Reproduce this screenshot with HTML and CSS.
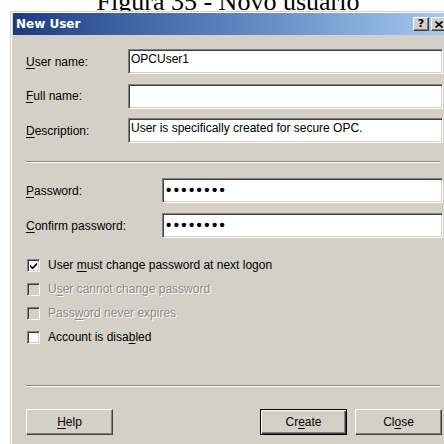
FILE: index.html
```html
<!DOCTYPE html>
<html lang="en">
<head>
<meta charset="utf-8">
<title>New User</title>
<link rel="stylesheet" href="styles.css">
</head>
<body>
<p class="figure-caption">Figura 35 - Novo usuário</p>
<div class="window">
  <div class="titlebar">
    <span class="title">New User</span>
    <div class="title-buttons">
      <span class="tbtn tbtn-help">?</span>
      <span class="tbtn"><svg width="8" height="7" viewBox="0 0 8 7"><path d="M0.5 0.5 L7.5 6.5 M7.5 0.5 L0.5 6.5" stroke="#000" stroke-width="1.6" fill="none"/></svg></span>
    </div>
  </div>
  <div class="client">
    <div class="fields fields-account">
      <span class="lbl"><u>U</u>ser name:</span>
      <div class="edit">OPCUser1</div>
      <span class="lbl"><u>F</u>ull name:</span>
      <div class="edit"></div>
      <span class="lbl"><u>D</u>escription:</span>
      <div class="edit">User is specifically created for secure OPC.</div>
    </div>

    <hr class="etched sep-top">

    <div class="fields fields-password">
      <span class="lbl"><u>P</u>assword:</span>
      <div class="edit edit-password">••••••••</div>
      <span class="lbl"><u>C</u>onfirm password:</span>
      <div class="edit edit-password">••••••••</div>
    </div>

    <ul class="checks">
      <li class="check">
        <span class="box"><svg width="7" height="7" viewBox="0 0 7 7"><path d="M0 2.5 L2.5 5 L7 0.5 L7 3 L2.5 7.5 L0 5 Z" fill="#000"/></svg></span>
        <span>User <u>m</u>ust change password at next logon</span>
      </li>
      <li class="check disabled">
        <span class="box"></span>
        <span>U<u>s</u>er cannot change password</span>
      </li>
      <li class="check disabled">
        <span class="box"></span>
        <span>Pass<u>w</u>ord never expires</span>
      </li>
      <li class="check">
        <span class="box"></span>
        <span>Account is disa<u>b</u>led</span>
      </li>
    </ul>

    <hr class="etched sep-bottom">

    <div class="buttons">
      <span class="btn btn-help"><span><u>H</u>elp</span></span>
      <span class="btn btn-default"><span>Cr<u>e</u>ate</span></span>
      <span class="btn"><span>Cl<u>o</u>se</span></span>
    </div>
  </div>
</div>
</body>
</html>
```

FILE: styles.css
```css
html, body {
  margin: 0;
  padding: 0;
  width: 444px;
  height: 444px;
  overflow: hidden;
  background: #fff;
}

/* document caption above the dialog, partly out of view */
.figure-caption {
  margin: 0;
  height: 11px;
  overflow: hidden;
  display: flex;
  align-items: flex-end;
  justify-content: center;
  padding-left: 12px;
  font: 26px/18px "Liberation Serif", serif;
  color: #000;
  white-space: nowrap;
}

/* classic dialog frame */
.window {
  margin-left: 10px;
  width: 442px;
  border-top: 1px solid #d4d0c8;
  border-left: 1px solid #d4d0c8;
  box-shadow: inset 1px 1px #fff;
  padding: 1px 0 0 2px;
  background: #d4d0c8;
  font: 12px/14px "Liberation Sans", Arial, sans-serif;
  color: #000;
}

.titlebar {
  width: 436px;
  height: 22px;
  box-sizing: border-box;
  padding: 0 2px 0 3px;
  display: flex;
  align-items: center;
  justify-content: space-between;
  background: linear-gradient(90deg, #1b3a80 0%, #3f62a4 25%, #6488c0 55%, #a6caf0 100%);
}

.title {
  color: #fff;
  font: bold 12px/14px "DejaVu Sans", sans-serif;
}

.title-buttons {
  display: flex;
  gap: 2px;
}

.tbtn {
  width: 16px;
  height: 14px;
  box-sizing: border-box;
  background: #d4d0c8;
  border-top: 1px solid #fff;
  border-left: 1px solid #fff;
  border-right: 1px solid #404040;
  border-bottom: 1px solid #404040;
  box-shadow: inset -1px -1px #808080;
  display: flex;
  align-items: center;
  justify-content: center;
  font: bold 11px/12px "DejaVu Sans", sans-serif;
}

.client {
  width: 436px;
  box-sizing: border-box;
  padding: 14px 6px 20px 13px;
}

.fields {
  display: grid;
  align-items: center;
}

.fields-account {
  grid-template-columns: 102px 1fr;
  row-gap: 9.5px;
}

.fields-password {
  margin-top: 15px;
  grid-template-columns: 136px 1fr;
  row-gap: 10px;
}

.lbl u,
.check u,
.btn u {
  text-underline-offset: 2px;
}

/* sunken edit box */
.edit {
  height: 25px;
  box-sizing: border-box;
  background: #fff;
  border-top: 1px solid #808080;
  border-left: 1px solid #808080;
  border-right: 1px solid #fff;
  border-bottom: 1px solid #fff;
  box-shadow: inset 1px 1px #404040, inset -1px -1px #d4d0c8;
  padding: 2px 2px;
  white-space: nowrap;
  overflow: hidden;
}

.edit-password {
  padding: 1px 3px;
  font: bold 15px/20px "Liberation Sans", Arial, sans-serif;
  letter-spacing: 2.4px;
}

.etched {
  margin: 0;
  height: 0;
  width: 414px;
  border: 0;
  border-top: 1px solid #808080;
  border-bottom: 1px solid #fff;
}

.sep-top {
  margin-top: 18px;
}

.sep-bottom {
  margin-top: 36px;
}

.checks {
  list-style: none;
  margin: 15px 0 0;
  padding: 0;
}

.check {
  height: 24px;
  display: flex;
  align-items: center;
  gap: 8px;
}

.box {
  margin-left: 1px;
  width: 13px;
  height: 13px;
  box-sizing: border-box;
  flex: none;
  background: #fff;
  border-top: 1px solid #808080;
  border-left: 1px solid #808080;
  border-right: 1px solid #fff;
  border-bottom: 1px solid #fff;
  box-shadow: inset 1px 1px #404040, inset -1px -1px #d4d0c8;
  display: flex;
  align-items: center;
  justify-content: center;
}

.box svg {
  display: block;
}

.check.disabled {
  color: #8e8b85;
  text-shadow: 1px 1px #fff;
}

.check.disabled .box {
  background: #d4d0c8;
}

.buttons {
  margin-top: 22px;
  width: 416px;
  display: flex;
  gap: 8px;
}

.btn {
  width: 87px;
  height: 26px;
  box-sizing: border-box;
  background: #d4d0c8;
  border-top: 1px solid #fff;
  border-left: 1px solid #fff;
  border-right: 1px solid #404040;
  border-bottom: 1px solid #404040;
  box-shadow: inset -1px -1px #808080;
  display: flex;
  align-items: center;
  justify-content: center;
}

.btn-help {
  margin-right: auto;
}

.btn-default {
  border: 1px solid #000;
  box-shadow: inset 1px 1px #fff, inset -1px -1px #404040, inset -2px -2px #808080;
}
```
